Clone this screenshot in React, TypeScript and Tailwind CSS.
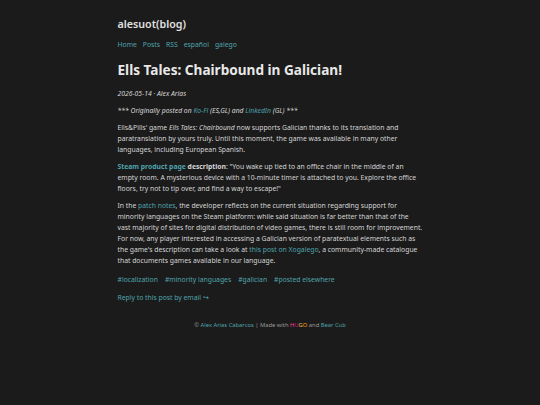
import React from "react";

const A = ({ children }: { children: React.ReactNode }) => (
  <a className="text-[#4fa3ac] no-underline" href="#">{children}</a>
);

export default function App() {
  return (
    <div className="min-h-[405px] w-full bg-[#1b1b1b] text-[#d6d6d6]" style={{ fontFamily: '"Noto Sans", sans-serif' }}>
      <div className="mx-auto w-[305px] pt-[16px]">
        <header>
          <div className="text-[10.7px] font-semibold leading-[16px] text-[#e0e0e0]">alesuot(blog)</div>
          <nav className="mt-[7px] flex gap-[6px] text-[6.8px] leading-[11px]">
            <A>Home</A>
            <A>Posts</A>
            <A>RSS</A>
            <A>español</A>
            <A>galego</A>
          </nav>
        </header>
        <main>
          <h1 className="mt-[11px] text-[13.6px] font-bold leading-[18px] text-[#e8e8e8]">Ells Tales: Chairbound in Galician!</h1>
          <div className="mt-[9px] text-[6.8px] italic leading-[11px]">2026-05-14 · Alex Arias</div>
          <div className="text-[6.8px] leading-[11px]">
            <p className="mt-[6px] italic">*** Originally posted on <A>Ko-Fi</A> (ES,GL) and <A>LinkedIn</A> (GL) ***</p>
            <p className="mt-[6px]">
              Ells&amp;Pills' game <em>Ells Tales: Chairbound</em> now supports Galician thanks to its translation and paratranslation by yours truly. Until this moment, the game was available in many other languages, including European Spanish.
            </p>
            <p className="mt-[6px]">
              <strong><A>Steam product page</A> description</strong>: "You wake up tied to an office chair in the middle of an empty room. A mysterious device with a 10-minute timer is attached to you. Explore the office floors, try not to tip over, and find a way to escape!"
            </p>
            <p className="mt-[6px]">
              In the <A>patch notes</A>, the developer reflects on the current situation regarding support for minority languages on the Steam platform: while said situation is far better than that of the vast majority of sites for digital distribution of video games, there is still room for improvement. For now, any player interested in accessing a Galician version of paratextual elements such as the game's description can take a look at <A>this post on Xogalego</A>, a community-made catalogue that documents games available in our language.
            </p>
            <div className="mt-[8px] flex gap-[7px]">
              <A>#localization</A>
              <A>#minority languages</A>
              <A>#galician</A>
              <A>#posted elsewhere</A>
            </div>
            <div className="mt-[7px]"><A>Reply to this post by email ↪</A></div>
          </div>
        </main>
        <footer className="mt-[17px] text-center text-[5.8px] leading-[10px] text-[#999]">
          © <A>Alex Arias Cabarcos</A> | Made with <span className="text-[#ff4088]">H</span><span className="text-[#c9177e]">U</span><span className="text-[#ebb951]">G</span><span className="text-[#ff9c00]">O</span> and <A>Bear Cub</A>
        </footer>
      </div>
    </div>
  );
}
